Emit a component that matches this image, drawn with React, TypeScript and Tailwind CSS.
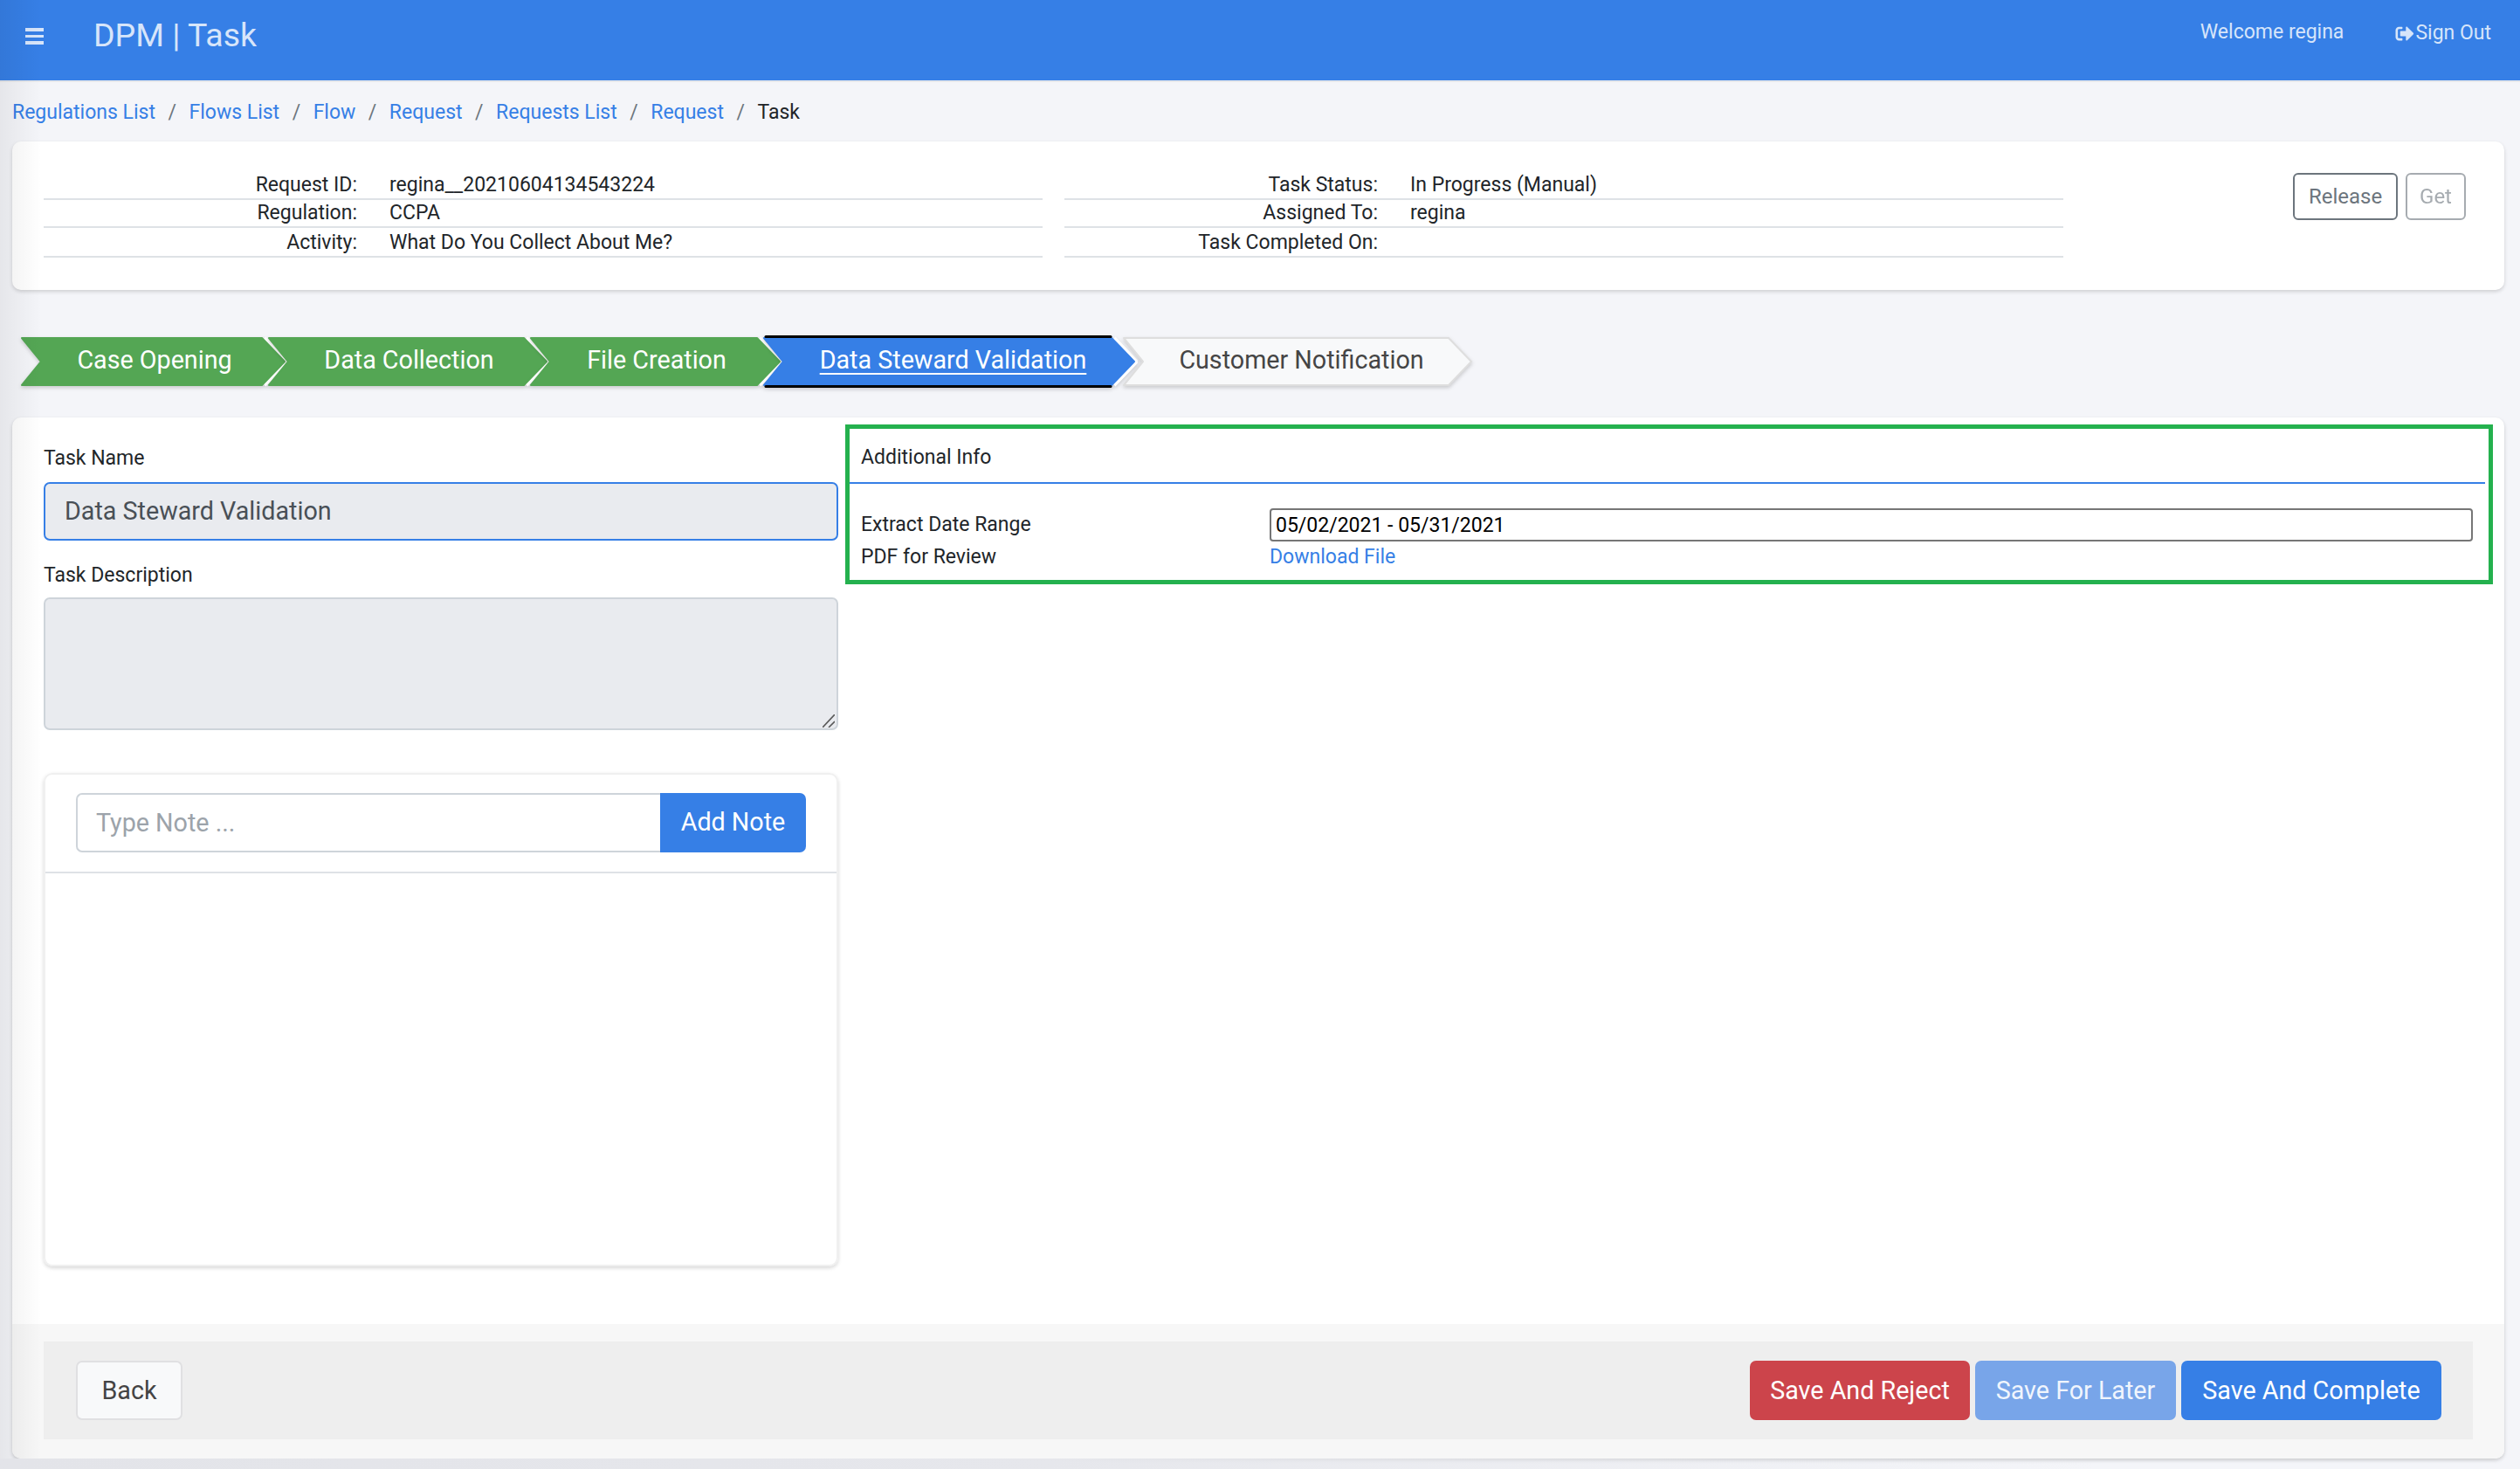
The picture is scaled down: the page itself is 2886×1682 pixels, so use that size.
import { FaSignOutAlt } from "react-icons/fa";

const crumbs = ["Regulations List", "Flows List", "Flow", "Request", "Requests List", "Request"];

const infoLeft = [
  ["Request ID:", "regina__20210604134543224", "h-[32px] pt-[1px]"],
  ["Regulation:", "CCPA", "h-[32px] pt-[1px]"],
  ["Activity:", "What Do You Collect About Me?", "h-[34px] pt-[3px]"],
];

const infoRight = [
  ["Task Status:", "In Progress (Manual)", "h-[32px] pt-[1px]"],
  ["Assigned To:", "regina", "h-[32px] pt-[1px]"],
  ["Task Completed On:", "", "h-[34px] pt-[3px]"],
];

function InfoRows({ rows }: { rows: string[][] }) {
  return (
    <div className="w-[1144px] shrink-0">
      {rows.map(([label, value, height]) => (
        <div key={label} className={`${height} flex items-center border-b-2 border-[#DEE2E6] text-[23px] text-[#212529]`}>
          <div className="w-[359px] text-right">{label}</div>
          <div className="ml-[37px]">{value}</div>
        </div>
      ))}
    </div>
  );
}

// chevron backdrop for the workflow steps
function Step({
  label,
  width,
  fill,
  stroke,
  overlap,
  active,
  textClass,
}: {
  label: string;
  width: number;
  fill: string;
  stroke: string;
  overlap: string;
  active?: boolean;
  textClass: string;
}) {
  const w = width;
  const points = `1,3 ${w - 30},3 ${w - 4},30 ${w - 30},57 1,57 23,30`;
  return (
    <div className={`relative h-[60px] shrink-0 ${overlap}`} style={{ width: w }}>
      <svg
        className="absolute inset-0 drop-shadow-[0_2px_2px_rgba(0,0,0,0.18)]"
        width={w}
        height={60}
        viewBox={`0 0 ${w} 60`}
      >
        {stroke === fill && (
          <polyline
            points={`${w - 27},3 ${w - 1},30 ${w - 27},57`}
            fill="none"
            stroke="#ffffff"
            strokeWidth="4"
            strokeLinejoin="round"
          />
        )}
        <polygon points={points} fill={fill} stroke={stroke} strokeWidth="2" strokeLinejoin="round" />
        {active && (
          <>
            <path d={`M3 1.5 H${w - 31}`} stroke="#000000" strokeWidth="3" strokeLinecap="round" />
            <path d={`M3 58.5 H${w - 31}`} stroke="#000000" strokeWidth="3" strokeLinecap="round" />
          </>
        )}
      </svg>
      <div className={`relative flex h-full items-center justify-center pb-[3px] text-[28.7px] ${textClass}`}>{label}</div>
    </div>
  );
}

export default function App() {
  return (
    <div className="relative h-[1682px] w-[2886px] overflow-hidden bg-[#F4F5F9] text-[#212529] [font-family:Roboto,sans-serif]">
      {/* Top bar */}
      <header className="flex h-[94px] items-start justify-between border-b-2 border-[#E6E8EC] bg-[#367FE6] text-[#D7E5FA]">
        <div className="flex items-center pl-[29px] pt-[20px]">
          <div className="flex w-[21px] flex-col gap-[4px] pt-[3px]">
            <span className="h-[3.5px] bg-[#D7E5FA]" />
            <span className="h-[3.5px] bg-[#D7E5FA]" />
            <span className="h-[3.5px] bg-[#D7E5FA]" />
          </div>
          <div className="ml-[57px] text-[37.5px] leading-[40px]">DPM | Task</div>
        </div>
        <div className="flex items-start pr-[33px] text-[23px]">
          <div className="pt-[22px] leading-[30px]">Welcome regina</div>
          <div className="ml-[58px] flex items-center pt-[23px] leading-[30px]">
            <FaSignOutAlt className="h-[21px] w-[24px]" />
            <span>Sign Out</span>
          </div>
        </div>
      </header>

      {/* Breadcrumb */}
      <nav className="flex h-[68px] items-center pl-[14px] pt-[3px] text-[23px]">
        {crumbs.map((c, i) => (
          <div key={i} className="flex items-center">
            <span className="text-[#367FE6]">{c}</span>
            <span className="px-[14.5px] text-[#6C757D]">/</span>
          </div>
        ))}
        <span className="text-[#212529]">Task</span>
      </nav>

      {/* Request summary */}
      <section className="ml-[14px] flex h-[170px] w-[2854px] rounded-[10px] bg-white pl-[36px] pr-[44px] shadow-[0_2px_4px_rgba(0,0,0,0.16)]">
        <div className="flex gap-[25px] pt-[35px]">
          <InfoRows rows={infoLeft} />
          <InfoRows rows={infoRight} />
        </div>
        <div className="ml-auto flex items-start gap-[9px] pt-[36px]">
          <button className="h-[54px] w-[120px] rounded-[6px] border-2 border-[#6C757D] text-[24px] text-[#6C757D]">Release</button>
          <button className="h-[54px] w-[69px] rounded-[6px] border-2 border-[#6C757D] text-[24px] text-[#6C757D] opacity-60">Get</button>
        </div>
      </section>

      {/* Workflow steps */}
      <div className="ml-[24px] mt-[52px] flex">
        <Step label="Case Opening" width={306} fill="#54A654" stroke="#54A654" overlap="" textClass="text-white" />
        <Step label="Data Collection" width={323} fill="#54A654" stroke="#54A654" overlap="-ml-[23px]" textClass="text-white" />
        <Step label="File Creation" width={290} fill="#54A654" stroke="#54A654" overlap="-ml-[23px]" textClass="text-white" />
        <Step label="Data Steward Validation" width={429} fill="#367FE6" stroke="#367FE6" overlap="-ml-[23px]" active textClass="pl-[6px] text-white underline underline-offset-[5px]" />
        <Step label="Customer Notification" width={403} fill="#F8F9FA" stroke="#DEDEDE" overlap="-ml-[17px]" textClass="pl-[6px] text-[#454545]" />
      </div>

      {/* Task card */}
      <section className="ml-[14px] mt-[34px] flex h-[1192px] w-[2854px] flex-col overflow-hidden rounded-[10px] bg-white shadow-[0_2px_4px_rgba(0,0,0,0.18)]">
        <div className="flex h-[1038px] pl-[36px]">
          <div className="w-[910px] shrink-0 pt-[31px]">
            <label className="block text-[23px] leading-[32px]">Task Name</label>
            <input
              readOnly
              value="Data Steward Validation"
              className="mt-[11px] block h-[67px] w-full rounded-[7px] border-2 border-[#367FE6] bg-[#E9EBEF] px-[22px] pb-[2px] text-[28.7px] text-[#495057] outline-none"
            />
            <label className="mt-[24px] block text-[23px] leading-[32px]">Task Description</label>
            <div className="relative mt-[9px]">
              <textarea
                readOnly
                className="block h-[152px] w-full resize-none rounded-[7px] border-2 border-[#CED4DA] bg-[#E9EBEF] outline-none"
              />
              {/* resize grip */}
              <svg className="absolute bottom-[3px] right-[4px]" width="14" height="15" viewBox="0 0 14 15">
                <path d="M0 15 L14 0 M7 15 L14 8" stroke="#5A5A5A" strokeWidth="1.6" fill="none" />
              </svg>
            </div>
            <div className="mt-[49px] h-[565px] rounded-[10px] border-2 border-[#F0F0F0] shadow-[0_2px_4px_rgba(0,0,0,0.16)]">
              <div className="border-b-2 border-[#DEE2E6] px-[35px] pb-[22px] pt-[21px]">
                <div className="flex h-[68px]">
                  <input
                    readOnly
                    placeholder="Type Note ..."
                    className="h-full flex-1 rounded-l-[7px] border-2 border-r-0 border-[#CED4DA] bg-white px-[21px] text-[28.7px] outline-none placeholder:text-[#9CA3AA]"
                  />
                  <button className="h-full w-[167px] rounded-r-[7px] bg-[#367FE6] text-[28.7px] text-white">Add Note</button>
                </div>
              </div>
            </div>
          </div>

          {/* Additional info */}
          <div className="ml-[8px] mt-[8px] h-[183px] w-[1887px] shrink-0 border-[5px] border-[#24B14E]">
            <div className="mr-[4px] flex h-[63px] items-center border-b-2 border-[#367FE6] pl-[13px] pt-[6px] text-[23px]">
              Additional Info
            </div>
            <div className="pl-[13px] pt-[28px] text-[23px]">
              <div className="flex h-[38px] items-center">
                <div className="w-[468px] shrink-0 pt-[1px]">Extract Date Range</div>
                <input
                  readOnly
                  value="05/02/2021 - 05/31/2021"
                  className="h-[38px] w-[1378px] rounded-[4px] border-2 border-[#767676] bg-white px-[5px] pt-[1px] text-[23px] text-black outline-none"
                />
              </div>
              <div className="flex h-[36px] items-center pt-[1px]">
                <div className="w-[468px] shrink-0">PDF for Review</div>
                <a className="text-[#367FE6]">Download File</a>
              </div>
            </div>
          </div>
        </div>

        {/* Footer actions */}
        <div className="flex-1 bg-[#F7F7F7] px-[36px] pt-[20px]">
          <div className="flex h-[112px] items-center justify-between bg-[#EEEEEE] pl-[37px] pr-[36px]">
            <button className="h-[68px] w-[122px] rounded-[7px] border-2 border-[#E0E0E2] bg-[#F8F9FA] pt-[1px] text-[28.7px] text-[#444444]">Back</button>
            <div className="flex gap-[6px]">
              <button className="h-[68px] w-[252px] rounded-[7px] bg-[#CC444B] pt-[1px] text-[28.7px] text-white">Save And Reject</button>
              <button className="h-[68px] w-[230px] rounded-[7px] bg-[#78A5E9] pt-[1px] text-[28.7px] text-[#F0F5FD]">Save For Later</button>
              <button className="h-[68px] w-[298px] rounded-[7px] bg-[#367FE6] pt-[1px] text-[28.7px] text-white">Save And Complete</button>
            </div>
          </div>
        </div>
      </section>

      {/* Sidebar shadow bleeding over the page edge */}
      <div className="pointer-events-none absolute inset-y-0 left-0 w-[48px] bg-linear-to-r from-black/[0.06] to-transparent" />
      <div className="pointer-events-none absolute bottom-0 left-0 h-[12px] w-[2400px] bg-linear-to-r from-[#E3E4E9] via-[#E6E7EC] to-transparent" />
    </div>
  );
}
